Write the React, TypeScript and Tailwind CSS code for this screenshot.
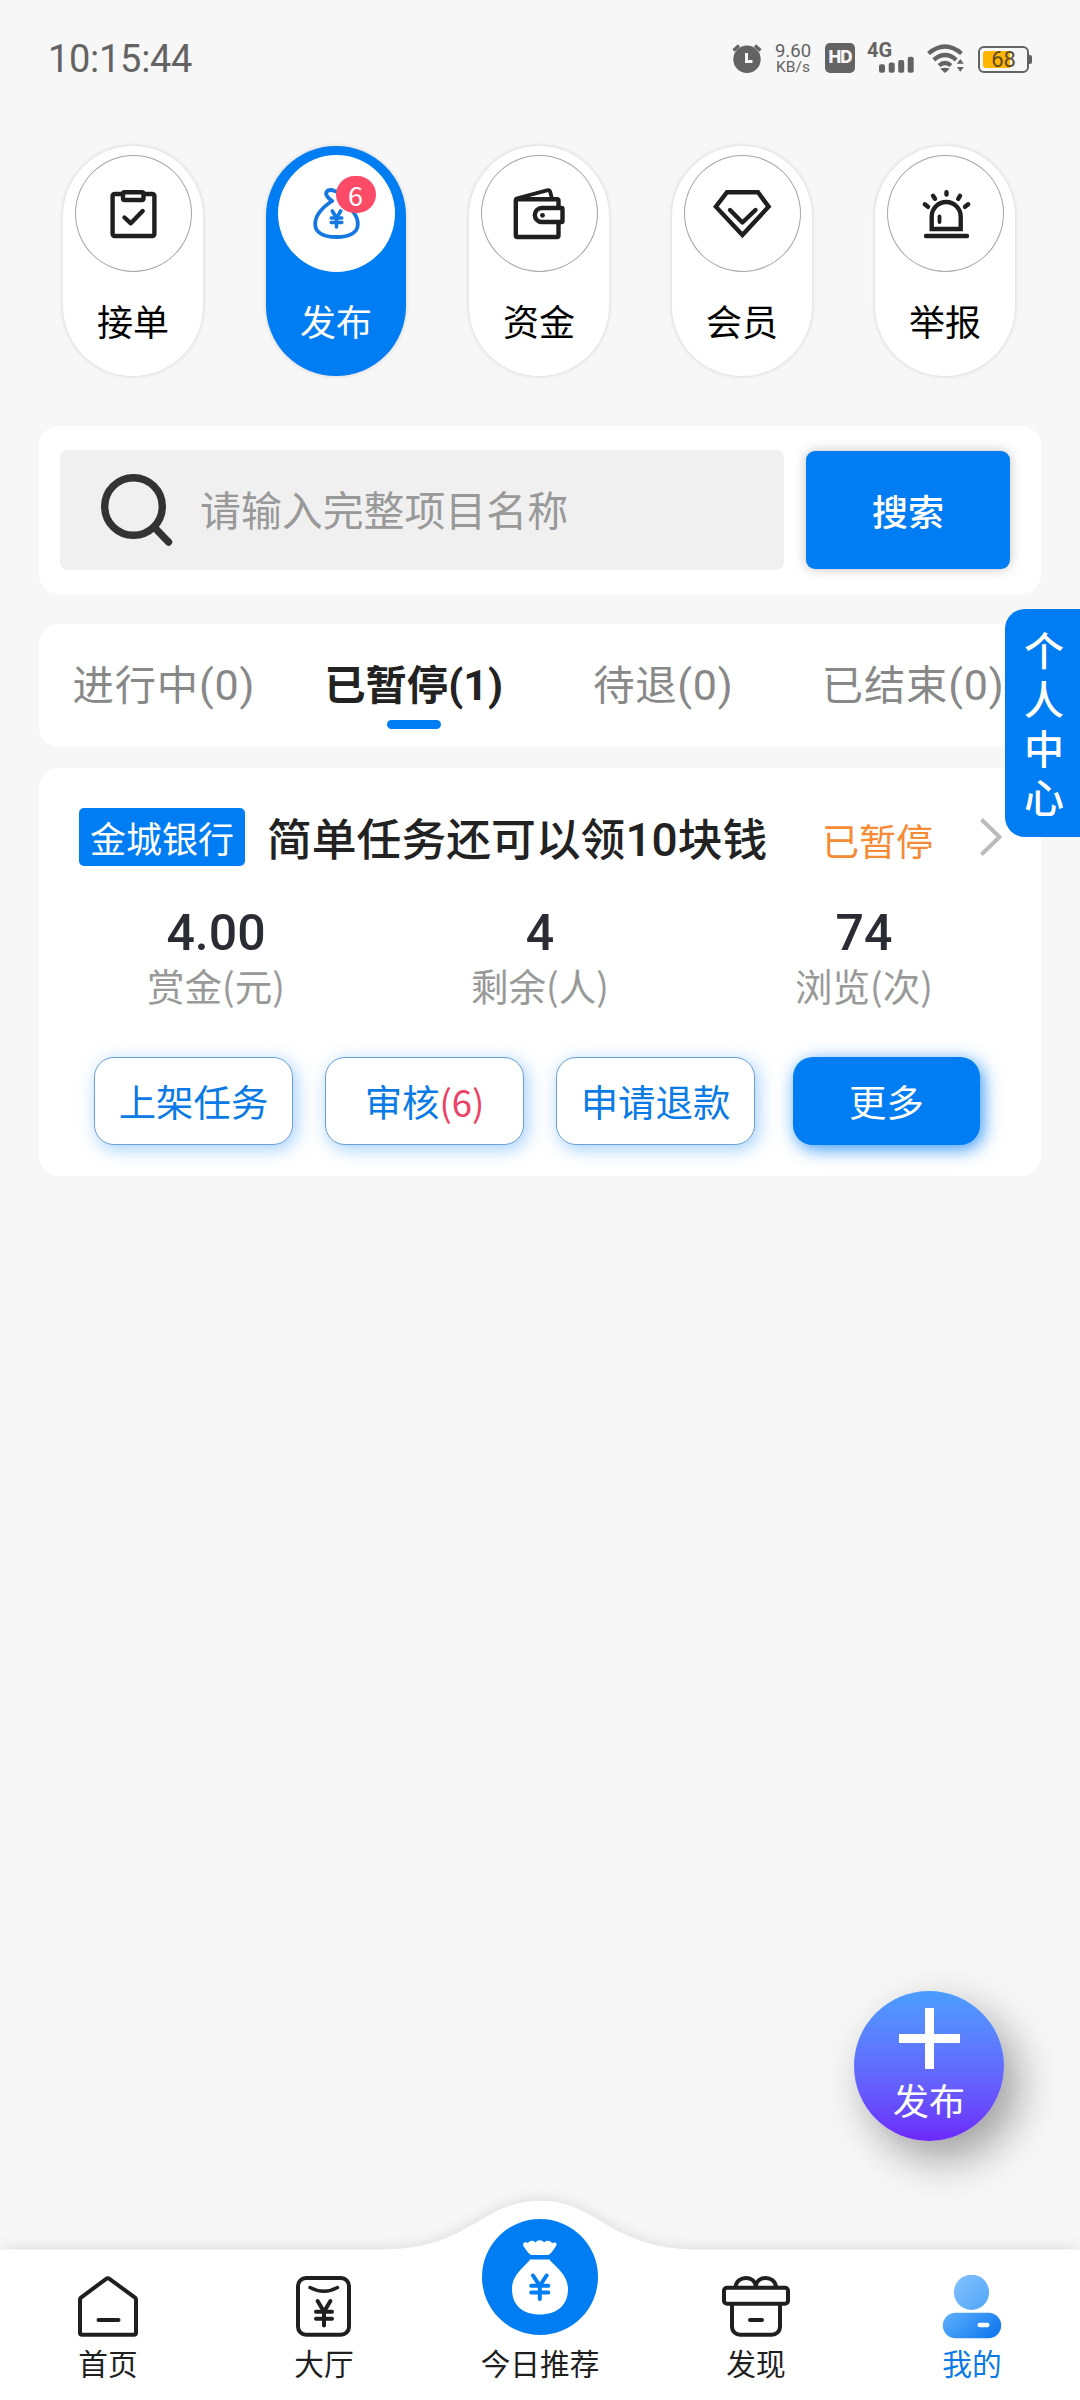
import type { ReactNode } from "react";
import clsx from "clsx";

// Yen sign drawn with strokes, cx/top are the centre line and the top of the arms
function Yen({ cx, top, w, h, sw, color }: { cx: number; top: number; w: number; h: number; sw: number; color: string }) {
  const mid = top + h * 0.44;
  return (
    <g stroke={color} strokeWidth={sw} strokeLinecap="round" strokeLinejoin="round" fill="none">
      <path d={`M${cx - w * 0.4} ${top}L${cx} ${mid}L${cx + w * 0.4} ${top}`} />
      <path d={`M${cx} ${mid}V${top + h}`} />
      <path d={`M${cx - w / 2} ${mid}H${cx + w / 2}`} />
      <path d={`M${cx - w / 2} ${top + h * 0.72}H${cx + w / 2}`} />
    </g>
  );
}

function PillIcon({ children, color = "#1f1f1f" }: { children: ReactNode; color?: string }) {
  return (
    <svg viewBox="0 0 117 117" className="h-[117px] w-[117px]" fill="none" stroke={color} strokeWidth="4.4" strokeLinecap="round" strokeLinejoin="round">
      {children}
    </svg>
  );
}

const CATEGORIES = [
  {
    label: "接单",
    icon: (
      <PillIcon>
        <rect x="37.6" y="39" width="41.8" height="42" rx="2" />
        <rect x="48" y="37.2" width="20.5" height="7.8" rx="1.5" fill="#fff" />
        <path d="M49.5 62.5L55.8 68.3L67.7 56" />
      </PillIcon>
    ),
  },
  {
    label: "发布",
    badge: "6",
    icon: (
      <PillIcon color="#1478e0">
        <path d="M54 46C43.5 53 37.2 61.500 37.2 69C37.2 78 46 82 58.500 82S79.800 78 79.800 69C79.800 61.500 73.500 53 63 46" strokeWidth="3.8" />
        <path d="M54 46L50.500 43C46 38.500 48.500 35 53 35C55.500 35 56.500 36.500 58.500 36.500" strokeWidth="3.8" />
        <Yen cx={58.5} top={56} w={10.5} h={16} sw={3.6} color="#1478e0" />
      </PillIcon>
    ),
  },
  {
    label: "资金",
    icon: (
      <PillIcon>
        <path d="M35.5 43.5L66 35.3Q68.500 34.700 69.200 37L71 43.500" strokeWidth="3.8" />
        <rect x="34.8" y="44.3" width="42.7" height="37.7" rx="1.5" />
        <path d="M60.8 53H80.5Q81.5 53 81.5 54V66Q81.5 67 80.5 67H60.8A7 7 0 0 1 60.8 53Z" fill="#fff" />
        <circle cx="61.5" cy="60.3" r="2.4" fill="#1f1f1f" stroke="none" />
      </PillIcon>
    ),
  },
  {
    label: "会员",
    icon: (
      <PillIcon>
        <path d="M43 37.2H74L84.6 51.7L58.4 80L31.9 51.7Z" strokeLinejoin="miter" />
        <path d="M46 55L58.4 67.5L71.5 55" />
      </PillIcon>
    ),
  },
  {
    label: "举报",
    icon: (
      <PillIcon>
        <path d="M39 81H80" />
        <path d="M44.7 74V61.5A14.5 14.5 0 0 1 73.7 61.5V74Z" strokeLinejoin="miter" />
        <path d="M52.5 61.5V67" strokeWidth="3.8" />
        <path d="M59.5 37.2V39.6M46 40.8L48 43.8M73 40.8L71.2 43.8M37.8 49.3L41 51.8M81.2 49.3L78 51.8" />
      </PillIcon>
    ),
  },
];

const TABS = [
  { label: "进行中", count: "(0)" },
  { label: "已暂停", count: "(1)", active: true },
  { label: "待退", count: "(0)" },
  { label: "已结束", count: "(0)" },
];

const STATS = [
  { value: "4.00", label: "赏金(元)" },
  { value: "4", label: "剩余(人)" },
  { value: "74", label: "浏览(次)" },
];

function NavIcon({ children }: { children?: ReactNode }) {
  return (
    <svg viewBox="0 0 80 64" className="h-16 w-20" fill="none" stroke="#1f1f1f" strokeWidth="4" strokeLinecap="round" strokeLinejoin="round">
      {children}
    </svg>
  );
}

const NAV = [
  {
    label: "首页",
    icon: (
      <NavIcon>
        <path d="M12 24.5Q12 23.4 13 22.6L38.2 3.8Q39.8 2.6 41.4 3.8L67 22.6Q68 23.4 68 24.5V57.7Q68 59.7 66 59.7H14Q12 59.7 12 57.7Z" />
        <path d="M30.5 45H50.5" />
      </NavIcon>
    ),
  },
  {
    label: "大厅",
    icon: (
      <NavIcon>
        <rect x="14" y="3" width="51" height="56.7" rx="8" />
        <path d="M26 12.5Q40 20 53.5 12.5" strokeWidth="3.4" />
        <Yen cx={40} top={26} w={16} h={24.5} sw={4} color="#1f1f1f" />
      </NavIcon>
    ),
  },
  { label: "今日推荐", icon: <NavIcon /> },
  {
    label: "发现",
    icon: (
      <NavIcon>
        <path d="M19.6 11.5C21.5 .2 38 .2 39.8 11C41.5 .2 58 .2 60 11.5" />
        <rect x="8" y="12.8" width="64" height="16" rx="3" />
        <path d="M16 30V51.7a8 8 0 0 0 8 8H56a8 8 0 0 0 8 -8V30" />
        <path d="M34 45H46" />
      </NavIcon>
    ),
  },
  {
    label: "我的",
    active: true,
    icon: (
      <svg viewBox="0 0 80 64" className="h-16 w-20">
        <defs>
          <linearGradient id="head" x1="0" y1="0" x2="1" y2="1">
            <stop offset="0" stopColor="#86c2fe" />
            <stop offset="1" stopColor="#4fa5f8" />
          </linearGradient>
          <linearGradient id="torso" x1="0" y1="0" x2="1" y2="0.5">
            <stop offset="0" stopColor="#62b1fc" />
            <stop offset="1" stopColor="#157df0" />
          </linearGradient>
        </defs>
        <circle cx="39.5" cy="17.3" r="17.6" fill="url(#head)" />
        <rect x="10.8" y="37.7" width="58.4" height="25.5" rx="12.7" fill="url(#torso)" />
        <rect x="45.5" y="47.7" width="12" height="4.5" rx="2.2" fill="#fff" />
      </svg>
    ),
  },
];

function StatusBar() {
  return (
    <header className="flex h-[146px] items-start justify-between pr-[48px] pl-[48px] font-[Roboto,sans-serif] text-[#636363]">
      <span className="mt-[34px] text-[38px] leading-[50px] tracking-[-0.3px]">10:15:44</span>
      <div className="mt-[40px] flex h-[36px]">
        <svg viewBox="0 0 30 36" className="mr-[12px] h-[36px] w-[30px]">
          <circle cx="15" cy="19.3" r="13.7" fill="#636363" />
          <path d="M1.5 10.5L7 5.5M28.5 10.5L23 5.5" stroke="#636363" strokeWidth="3.2" />
          <path d="M14.5 13V21.5H20.5" fill="none" stroke="#f7f7f7" strokeWidth="3" />
        </svg>
        <div className="mr-[13px] flex w-[38px] flex-col items-center">
          <span className="mt-[3px] text-[18.5px] leading-[16px]">9.60</span>
          <span className="mt-[2px] text-[15.5px] leading-[13px]">KB/s</span>
        </div>
        <div className="mt-[3px] mr-[12px] flex h-[30px] w-[30px] items-center justify-center rounded-[5px] bg-[#636363] font-[Inter] text-[17px] font-extrabold tracking-[-1px] text-[#f7f7f7]">
          HD
        </div>
        <div className="relative mr-[13px] h-[36px] w-[47px]">
          <span className="absolute top-0 left-0 text-[20px] leading-[21px] font-bold">4G</span>
          <svg viewBox="0 0 47 36" className="h-[36px] w-[47px]" fill="#636363">
            <rect x="12" y="24.3" width="6" height="8.5" rx="2" />
            <rect x="21.7" y="22.6" width="6" height="10.2" rx="2" />
            <rect x="31.2" y="20" width="6" height="12.8" rx="2" />
            <rect x="40.7" y="16.7" width="6" height="16" rx="2" />
          </svg>
        </div>
        <svg viewBox="0 0 37 36" className="mr-[14px] h-[36px] w-[37px]" fill="none" stroke="#636363" strokeWidth="4.2">
          <path d="M1.5 13.5Q18 -0.5 34.5 13.5" />
          <path d="M6.8 19.8Q18 10.2 29.2 19.8" />
          <path d="M12 25.5Q18 20.4 24 25.5" />
          <path d="M18 33L13.2 28.8Q18 26.5 22.8 28.8Z" fill="#636363" stroke="none" />
          <path d="M33.3 19L36.8 23.8H29.8ZM33.3 31.8L36.8 27H29.8Z" fill="#636363" stroke="none" />
        </svg>
        <div className="mt-[6px] flex h-[27px] items-center">
          <div className="relative h-[27px] w-[51px] rounded-[6px] border-2 border-[#636363]">
            <div className="absolute top-[3px] left-[3px] h-[17px] w-[27px] rounded-l-[3px] bg-[#ffb400]" />
            <div className="absolute inset-0 text-center text-[22px] leading-[24px] text-[#5a4a25]">68</div>
          </div>
          <div className="h-[9px] w-[3px] rounded-r-[2px] bg-[#636363]" />
        </div>
      </div>
    </header>
  );
}

export default function App() {
  return (
    <div className="relative flex h-[2400px] w-[1080px] flex-col overflow-hidden bg-[#f7f7f7] font-['Noto_Sans_CJK_SC',sans-serif] text-[#222]">
      <StatusBar />

      <div className="flex justify-between pr-[65px] pl-[63px]">
        {CATEGORIES.map((c) => (
          <div
            key={c.label}
            className={clsx(
              "flex h-[230px] w-[140px] flex-col items-center rounded-full pt-[9px] shadow-[0_0_4px_rgba(0,0,0,0.16)]",
              c.badge ? "bg-[#007df2] text-white" : "bg-white text-black",
            )}
          >
            <div className={clsx("relative h-[117px] w-[117px] rounded-full bg-white ring-inset", !c.badge && "ring-1 ring-[#a5a5a5]")}>
              {c.icon}
              {c.badge ? (
                <span className="absolute top-[21px] left-[58px] h-[37px] w-[40px] rounded-full bg-[#fb4b67] text-center text-[27px] leading-[37px] text-white">
                  {c.badge}
                </span>
              ) : null}
            </div>
            <span className="mt-[22px] text-[36px] leading-[52px]">{c.label}</span>
          </div>
        ))}
      </div>

      <div className="mx-[39px] mt-[50px] flex h-[168px] items-center rounded-[20px] bg-white pl-[21px]">
        <div className="flex h-[120px] w-[724px] items-center rounded-[8px] bg-[#f0f0f0] pl-[40px]">
          <svg viewBox="0 0 74 74" className="h-[74px] w-[74px]" fill="none" stroke="#333" strokeWidth="7.4">
            <circle cx="33.5" cy="33.5" r="28.8" />
            <path d="M54 54L68.5 69" strokeLinecap="round" />
          </svg>
          <span className="-mt-[3px] ml-[26px] text-[40.9px] leading-[60px] text-[#999]">请输入完整项目名称</span>
        </div>
        <button className="ml-[22px] h-[118px] w-[204px] rounded-[9px] bg-[#007df2] text-[36px] font-medium text-white shadow-[0_0_12px_rgba(0,0,0,0.25)]">
          搜索
        </button>
      </div>

      <div className="mx-[39px] mt-[30px] grid h-[123px] grid-cols-4 rounded-[20px] bg-white pr-[3px]">
        {TABS.map((t) => (
          <div key={t.label} className="flex flex-col items-center pt-[28px]">
            <span
              className={clsx(
                "text-[41.3px] leading-[60px] whitespace-nowrap",
                t.active ? "font-bold text-[#222]" : "tracking-[0.8px] text-[#888]",
              )}
            >
              {t.label}
              <span className="font-[Roboto] text-[43px] leading-none">{t.count}</span>
            </span>
            {t.active ? <span className="mt-[8px] h-[9px] w-[54px] rounded-full bg-[#007df2]" /> : null}
          </div>
        ))}
      </div>

      <section className="mx-[39px] mt-[21px] h-[408px] rounded-[20px] bg-white pt-[40px]">
        <div className="flex h-[58px] items-center pl-[40px]">
          <span className="flex h-[58px] w-[166px] items-center justify-center rounded-[5px] bg-[#007df2] text-[36px] leading-[50px] text-white">金城银行</span>
          <span className="ml-[22px] w-[500px] text-[44.8px] leading-[58px] font-medium whitespace-nowrap">
            简单任务还可以领<span className="font-[Roboto] text-[46px] leading-none">10</span>块钱
          </span>
          <span className="mt-[6px] ml-[55px] text-[37px] leading-[54px] text-[#f68a35]">已暂停</span>
          <svg viewBox="0 0 24 40" className="ml-[46px] h-[40px] w-[24px]" fill="none" stroke="#bbb" strokeWidth="4">
            <path d="M2.5 2.5L20.5 20L2.5 37.5" />
          </svg>
        </div>

        <div className="mt-[33px] grid grid-cols-3 px-[15px]">
          {STATS.map((s) => (
            <div key={s.label} className="flex flex-col items-center">
              <span className="font-[Roboto] text-[50px] leading-[68px] font-medium text-[#2b2b33]">{s.value}</span>
              <span className="-mt-[9px] text-[37.5px] leading-[54px] text-[#999]">{s.label}</span>
            </div>
          ))}
        </div>

        <div className="mt-[45px] flex pl-[55px] text-[37.4px] text-[#0a7be6]">
          <button className="mr-[32px] h-[88px] w-[199px] rounded-[20px] border border-[#6a9fd8] bg-white shadow-[3px_4px_18px_rgba(0,125,242,0.38)]">上架任务</button>
          <button className="mr-[32px] h-[88px] w-[199px] rounded-[20px] border border-[#6a9fd8] bg-white shadow-[3px_4px_18px_rgba(0,125,242,0.38)]">
            审核<span className="text-[36.5px] text-[#ee4265]">(6)</span>
          </button>
          <button className="mr-[38px] h-[88px] w-[199px] rounded-[20px] border border-[#6a9fd8] bg-white shadow-[3px_4px_18px_rgba(0,125,242,0.38)]">申请退款</button>
          <button className="h-[88px] w-[187px] rounded-[20px] bg-[#007df2] text-white shadow-[3px_4px_18px_rgba(0,125,242,0.8)]">更多</button>
        </div>
      </section>

      {/* drawer handle on the right edge */}
      <div className="absolute top-[609px] right-0 flex h-[228px] w-[75px] items-start rounded-l-[20px] bg-[#007df2] pt-[22px] pl-[9px]">
        <span className="text-[40px] leading-[60px] font-medium tracking-[9px] text-white [writing-mode:vertical-rl]">个人中心</span>
      </div>

      <div className="absolute top-[1991px] left-[854px] flex h-[150px] w-[150px] flex-col items-center rounded-full bg-linear-to-b from-[#4a9dff] to-[#6b27f9] shadow-[14px_18px_44px_rgba(0,0,0,0.36)]">
        <svg viewBox="0 0 61 61" className="mt-[17px] h-[61px] w-[61px]" stroke="#fff" strokeWidth="9">
          <path d="M30.5 0V61M0 30.5H61" />
        </svg>
        <span className="mt-[4px] text-[36px] leading-[52px] text-white">发布</span>
      </div>

      <nav className="relative mt-auto h-[150px]">
        <svg viewBox="0 0 1080 220" className="absolute bottom-0 left-0 h-[220px] w-[1080px] drop-shadow-[0_0_8px_rgba(0,0,0,0.12)]">
          <path d="M-20 69.5H382C470 69.5 482 20.7 540 20.7S610 69.5 698 69.5H1100V240H-20Z" fill="#fff" />
        </svg>
        <svg viewBox="0 0 116 116" className="absolute -top-[31px] left-[482px] z-10 h-[116px] w-[116px]">
          <circle cx="58" cy="58" r="58" fill="#007df2" />
          <path d="M41.5 27C40 24 43 22 46 24C48 21.5 51 21 53.5 23.5C55.5 20.5 60 20.5 62 23.5C64.5 21 68 21.5 70 24C73 22.5 76 24 74 27C72 30 69.5 34 66.5 36H49C46 34 43.5 30 41.5 27Z" fill="#fff" />
          <path d="M48 40.5H67.5C72 47 86 55 86 70C86 87 74 95.5 57.8 95.5S30 87 30 70C30 55 44 47 48 40.5Z" fill="#fff" />
          <Yen cx={57.8} top={56.5} w={17} h={23.5} sw={4} color="#007df2" />
        </svg>
        <div className="relative grid grid-cols-5 pt-[25px]">
          {NAV.map((n) => (
            <div key={n.label} className="flex flex-col items-center">
              {n.icon}
              <span className={clsx("mt-[2px] text-[29.7px] leading-[44px]", n.active ? "text-[#0a7be6]" : "text-[#1f1f1f]")}>{n.label}</span>
            </div>
          ))}
        </div>
      </nav>
    </div>
  );
}
